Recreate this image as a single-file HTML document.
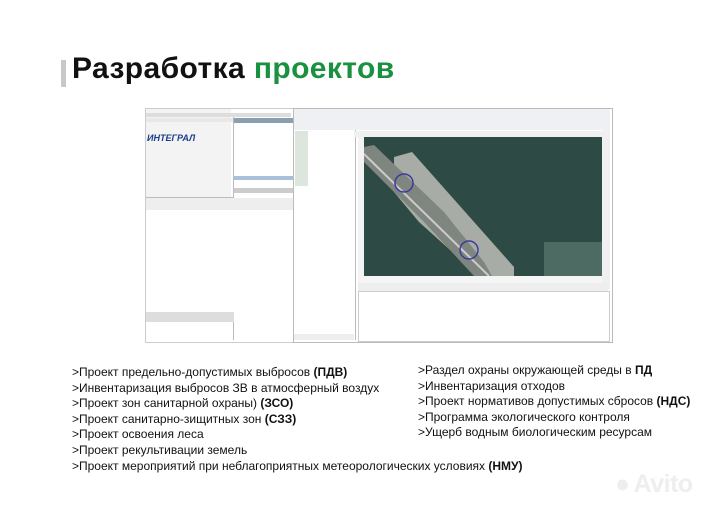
<!DOCTYPE html>
<html><head><meta charset="utf-8"><style>
body{margin:0;width:720px;height:509px;background:#fff;position:relative;overflow:hidden;font-family:"Liberation Sans",sans-serif}
.a{position:absolute}
h1{position:absolute;left:72px;top:52px;margin:0;font-size:30px;font-weight:bold;color:#111;letter-spacing:0.4px}
h1 span{color:#1a9140}
.bar{left:61px;top:60px;width:5px;height:27px;background:#c8c8c8}
.t{position:absolute;font-size:12px;color:#111;line-height:15.6px;white-space:nowrap}
.g{background:#e9e9e9}
</style></head><body>
<div class="a bar"></div>
<h1>Разработка <span>проектов</span></h1>

<div class="a" style="left:145px;top:108px;width:150px;height:233px;background:#fff;border:1px solid #ccc"></div>
<div class="a g" style="left:146px;top:109px;width:85px;height:88px;background:#f3f3f3"></div>
<div class="a" style="left:147px;top:133px;font-size:9px;font-style:italic;font-weight:bold;color:#1c3d8c">ИНТЕГРАЛ</div>
<div class="a" style="left:146px;top:113px;width:145px;height:4px;background:#ddd"></div>
<div class="a" style="left:146px;top:118px;width:145px;height:4px;background:#e8e8e8"></div>
<div class="a" style="left:146px;top:197px;width:148px;height:1px;background:#bbb"></div>
<div class="a" style="left:146px;top:198px;width:148px;height:12px;background:#eee"></div>
<div class="a" style="left:146px;top:312px;width:88px;height:10px;background:#ddd"></div>
<div class="a" style="left:233px;top:322px;width:1px;height:18px;background:#bbb"></div>
<div class="a" style="left:233px;top:117px;width:60px;height:81px;background:#fff;border-left:1px solid #bbb"></div>
<div class="a" style="left:234px;top:118px;width:59px;height:5px;background:#8aa0b0"></div>
<div class="a" style="left:234px;top:176px;width:59px;height:4px;background:#a8c0d8"></div>
<div class="a" style="left:234px;top:188px;width:59px;height:5px;background:#ccc"></div>

<div class="a" style="left:293px;top:108px;width:318px;height:233px;background:#fff;border:1px solid #bbb"></div>
<div class="a" style="left:294px;top:109px;width:316px;height:21px;background:#eef0f3"></div>
<div class="a" style="left:294px;top:130px;width:61px;height:210px;border-right:1px solid #bbb"></div>
<div class="a" style="left:295px;top:131px;width:13px;height:55px;background:#dde6dd"></div>
<div class="a" style="left:354px;top:131px;width:248px;height:6px;background:#f0f0f0"></div>
<div class="a" style="left:358px;top:137px;width:6px;height:139px;background:#f3f3f3"></div>
<div class="a" style="left:364px;top:137px;width:238px;height:139px;background:#2e4a44;overflow:hidden">
<svg width="238" height="139" style="position:absolute;left:0;top:0">
<polygon points="30,20 48,15 150,130 150,139 115,139 55,85 30,55" fill="#a8aca6"/>
<polygon points="0,10 10,8 80,75 120,125 128,139 110,139 60,85 0,25" fill="#7f857f"/>
<line x1="0" y1="17" x2="125" y2="139" stroke="#ccc" stroke-width="2"/>
<circle cx="40" cy="46" r="9" fill="none" stroke="#3a3aa0" stroke-width="1.5"/>
<circle cx="105" cy="113" r="9" fill="none" stroke="#3a3aa0" stroke-width="1.5"/>
<rect x="180" y="105" width="58" height="34" fill="#4d6b63"/>
</svg></div>
<div class="a" style="left:602px;top:130px;width:8px;height:160px;background:#f0f0f0"></div>
<div class="a" style="left:358px;top:276px;width:244px;height:7px;background:#f5f5f5"></div>
<div class="a" style="left:358px;top:283px;width:250px;height:8px;background:#eee"></div>
<div class="a" style="left:358px;top:291px;width:250px;height:49px;background:#fff;border:1px solid #ccc"></div>
<div class="a" style="left:294px;top:334px;width:60px;height:6px;background:#eee"></div>

<div class="t" style="left:72px;top:365px">&gt;Проект предельно-допустимых выбросов <b>(ПДВ)</b><br>&gt;Инвентаризация выбросов ЗВ в атмосферный воздух<br>&gt;Проект зон санитарной охраны) <b>(ЗСО)</b><br>&gt;Проект санитарно-зищитных зон <b>(СЗЗ)</b><br>&gt;Проект освоения леса<br>&gt;Проект рекультивации земель<br>&gt;Проект мероприятий при неблагоприятных метеорологических условиях <b>(НМУ)</b></div>
<div class="t" style="left:418px;top:363px">&gt;Раздел охраны окружающей среды в <b>ПД</b><br>&gt;Инвентаризация отходов<br>&gt;Проект нормативов допустимых сбросов <b>(НДС)</b><br>&gt;Программа экологического контроля<br>&gt;Ущерб водным биологическим ресурсам</div>

<div class="a" style="left:615px;top:470px;font-size:25px;font-weight:bold;color:#eee;letter-spacing:-0.5px">●<span style="margin-left:4px">Avito</span></div>
</body></html>
